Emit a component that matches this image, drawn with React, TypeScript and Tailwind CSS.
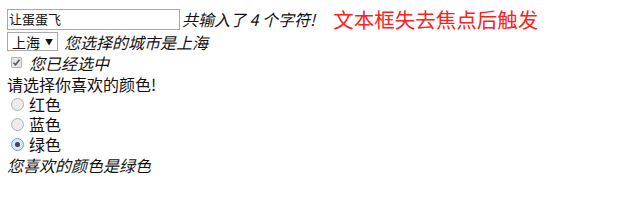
import React from "react";

const font = { fontFamily: '"Microsoft YaHei", "Noto Sans CJK SC", sans-serif' };

export default function App() {
  return (
    <div className="w-[631px] h-[202px] bg-white px-[7px] pt-[8px] text-[16px] leading-[20px] text-[#111]" style={font}>
      <div className="flex items-center h-[22px]">
        <div className="w-[173px] h-[21px] border border-[#a9a9a9] flex items-center pl-[1px] text-[13px]">让蛋蛋飞</div>
        <span className="italic text-[16px] ml-[2px]">共输入了 4 个字符!</span>
        <span className="ml-[18px] text-[20.5px] text-[#ff2020] leading-[22px]">文本框失去焦点后触发</span>
      </div>
      <div className="flex items-center h-[21px] mt-[1px]">
        <div className="w-[51px] h-[19px] border border-[#a9a9a9] flex items-center pl-[4px] text-[14px] bg-white">
          <span>上海</span>
          <span className="ml-[5px] text-[8px]">▼</span>
        </div>
        <span className="italic ml-[6px]">您选择的城市是上海</span>
      </div>
      <div className="flex items-center h-[21px]">
        <div className="ml-[4px] w-[11px] h-[11px] border border-[#b5b5b5] bg-[#e6e6e6] rounded-[1px] flex items-center justify-center">
          <svg width="9" height="9" viewBox="0 0 9 9"><path d="M1.5 4.8 L3.5 6.8 L7.5 1.8" stroke="#555" strokeWidth="1.6" fill="none" /></svg>
        </div>
        <span className="italic ml-[7px]">您已经选中</span>
      </div>
      <div className="h-[21px] flex items-center">请选择你喜欢的颜色!</div>
      {["红色", "蓝色", "绿色"].map((c, i) => (
        <div key={c} className="flex items-center h-[20px]">
          <div className={`ml-[4px] w-[13px] h-[13px] rounded-full border ${i === 2 ? "border-[#6a9ce8] bg-[#dbe7f8]" : "border-[#b0b0b0] bg-[#ececec]"} flex items-center justify-center`}>
            {i === 2 && <div className="w-[5px] h-[5px] rounded-full bg-[#444]" />}
          </div>
          <span className="ml-[5px] leading-[20px]">{c}</span>
        </div>
      ))}
      <div className="italic h-[22px] flex items-center">您喜欢的颜色是绿色</div>
    </div>
  );
}
